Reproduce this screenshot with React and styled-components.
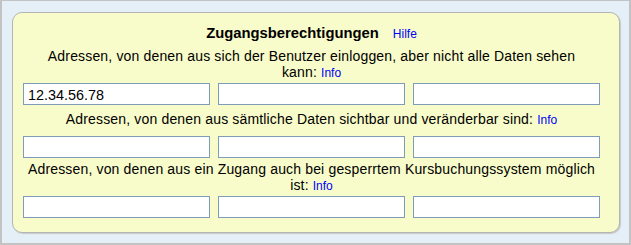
import React from 'react'
import styled, { createGlobalStyle } from 'styled-components'

const GlobalStyle = createGlobalStyle`
  html, body {
    margin: 0;
    padding: 0;
  }
  body {
    font-family: "Liberation Sans", Arial, sans-serif;
    color: #000;
  }
`

const Frame = styled.div`
  box-sizing: border-box;
  width: 631px;
  height: 245px;
  background: #e4eff7;
  border-style: solid;
  border-color: #c3c3c3;
  border-width: 1px 2px 2px 2px;
  padding: 11px 0 0 10px;
`

const Panel = styled.div`
  box-sizing: border-box;
  width: 608px;
  height: 221px;
  background: #f8fcca;
  border: 1px solid #b4b4b4;
  border-radius: 10px;
  box-shadow: 1px 1px 1px #c8c8c8;
  padding: 12px 0 0 10px;
`

const Content = styled.div`
  width: 577px;
  display: flex;
  flex-direction: column;
`

const TitleRow = styled.div`
  display: flex;
  justify-content: center;
  align-items: baseline;
  gap: 14px;
  line-height: 16px;
  margin-bottom: 6px;
`

const Title = styled.span`
  font-size: 14.8px;
  font-weight: bold;
`

const Link = styled.a`
  color: #0000ff;
  font-size: 12px;
  letter-spacing: 0;
  text-decoration: none;
  cursor: pointer;
`

const Caption = styled.div`
  font-size: 14px;
  letter-spacing: 0.16px;
  line-height: 16px;
  text-align: center;
  margin-top: ${p => p.$top || 0}px;
  margin-bottom: ${p => p.$bottom || 0}px;
`

const NoWrap = styled.span`
  white-space: nowrap;
`

const Fields = styled.div`
  display: grid;
  grid-template-columns: repeat(3, 187px);
  column-gap: 8px;
`

const Field = styled.input`
  box-sizing: border-box;
  height: 22px;
  width: 187px;
  margin: 0;
  border: 1px solid #7f9db9;
  background: #fff;
  padding: 1px 4px 0;
  font-family: "Liberation Sans", Arial, sans-serif;
  font-size: 14.4px;
  color: #000;
  outline: none;
`

const sections = [
  {
    text: 'Adressen, von denen aus sich der Benutzer einloggen, aber nicht alle Daten sehen',
    last: 'kann:',
    values: ['12.34.56.78', '', ''],
    top: 0,
    bottom: 2,
  },
  {
    text: 'Adressen, von denen aus sämtliche Daten sichtbar und veränderbar',
    last: 'sind:',
    values: ['', '', ''],
    top: 6,
    bottom: 8,
  },
  {
    text: 'Adressen, von denen aus ein Zugang auch bei gesperrtem Kursbuchungssystem möglich',
    last: 'ist:',
    values: ['', '', ''],
    top: 3,
    bottom: 2,
  },
]

export default function App() {
  return (
    <>
      <GlobalStyle />
      <Frame>
        <Panel>
          <Content>
            <TitleRow>
              <Title>Zugangsberechtigungen</Title>
              <Link>Hilfe</Link>
            </TitleRow>
            {sections.map((s, i) => (
              <React.Fragment key={i}>
                <Caption $top={s.top} $bottom={s.bottom}>
                  {s.text} <NoWrap>{s.last} <Link>Info</Link></NoWrap>
                </Caption>
                <Fields>
                  {s.values.map((v, j) => (
                    <Field key={j} type="text" defaultValue={v} />
                  ))}
                </Fields>
              </React.Fragment>
            ))}
          </Content>
        </Panel>
      </Frame>
    </>
  )
}
